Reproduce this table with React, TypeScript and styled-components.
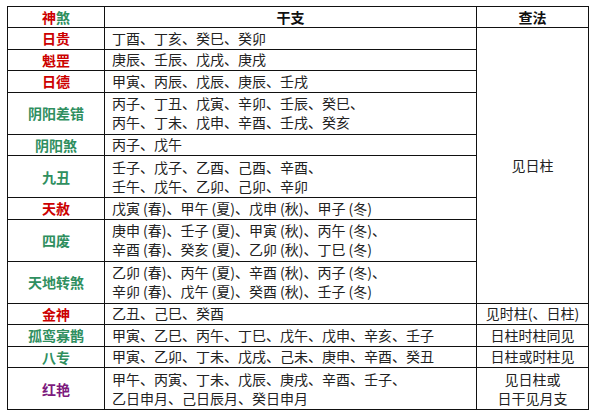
import React from 'react';
import styled, { createGlobalStyle } from 'styled-components';

type Tone = 'red' | 'green' | 'purple';

type Row = {
  name: string;
  tone: Tone;
  lines: string[];
  method?: string[];
};

const toneColor: Record<Tone, string> = {
  red: '#cc0000',
  green: '#2f8f5f',
  purple: '#7d1a7d',
};

const rows: Row[] = [
  { name: '日贵', tone: 'red', lines: ['丁酉、丁亥、癸巳、癸卯'] },
  { name: '魁罡', tone: 'red', lines: ['庚辰、壬辰、戊戌、庚戌'] },
  { name: '日德', tone: 'red', lines: ['甲寅、丙辰、戊辰、庚辰、壬戌'] },
  {
    name: '阴阳差错',
    tone: 'green',
    lines: ['丙子、丁丑、戊寅、辛卯、壬辰、癸巳、', '丙午、丁未、戊申、辛酉、壬戌、癸亥'],
  },
  { name: '阴阳煞', tone: 'green', lines: ['丙子、戊午'] },
  {
    name: '九丑',
    tone: 'green',
    lines: ['壬子、戊子、乙酉、己酉、辛酉、', '壬午、戊午、乙卯、己卯、辛卯'],
  },
  { name: '天赦', tone: 'red', lines: ['戊寅(春)、甲午(夏)、戊申(秋)、甲子(冬)'] },
  {
    name: '四废',
    tone: 'green',
    lines: ['庚申(春)、壬子(夏)、甲寅(秋)、丙午(冬)、', '辛酉(春)、癸亥(夏)、乙卯(秋)、丁巳(冬)'],
  },
  {
    name: '天地转煞',
    tone: 'green',
    lines: ['乙卯(春)、丙午(夏)、辛酉(秋)、丙子(冬)、', '辛卯(春)、戊午(夏)、癸酉(秋)、壬子(冬)'],
  },
  { name: '金神', tone: 'red', lines: ['乙丑、己巳、癸酉'], method: ['见时柱(、日柱)'] },
  {
    name: '孤鸾寡鹊',
    tone: 'green',
    lines: ['甲寅、乙巳、丙午、丁巳、戊午、戊申、辛亥、壬子'],
    method: ['日柱时柱同见'],
  },
  {
    name: '八专',
    tone: 'green',
    lines: ['甲寅、乙卯、丁未、戊戌、己未、庚申、辛酉、癸丑'],
    method: ['日柱或时柱见'],
  },
  {
    name: '红艳',
    tone: 'purple',
    lines: ['甲午、丙寅、丁未、戊辰、庚戌、辛酉、壬子、', '乙日申月、己日辰月、癸日申月'],
    method: ['见日柱或', '日干见月支'],
  },
];

// the month in brackets is set a little apart, like the half-width brackets of the source
function withSeasons(line: string) {
  return line.split(/(\([^)]*\))/).map((part, i) =>
    part.startsWith('(') ? <Season key={i}>{part}</Season> : part
  );
}

export default function App() {
  const sharedSpan = rows.filter((r) => !r.method).length;

  return (
    <>
      <GlobalStyle />
      <Page>
        <Table>
          <colgroup>
            <col style={{ width: 97 }} />
            <col style={{ width: 372 }} />
            <col style={{ width: 112 }} />
          </colgroup>
          <thead>
            <HeadRow>
              <HeadCell>
                <Name $tone="red">神</Name>
                <Name $tone="green">煞</Name>
              </HeadCell>
              <HeadCell>干支</HeadCell>
              <HeadCell>查法</HeadCell>
            </HeadRow>
          </thead>
          <tbody>
            {rows.map((row, i) => (
              <BodyRow key={row.name} $double={row.lines.length > 1}>
                <NameCell>
                  <Name $tone={row.tone}>{row.name}</Name>
                </NameCell>
                <BranchCell>
                  {row.lines.map((line, j) => (
                    <Line key={j}>{withSeasons(line)}</Line>
                  ))}
                </BranchCell>
                {row.method ? (
                  <MethodCell>
                    {row.method.map((m, j) => (
                      <Line key={j}>{m}</Line>
                    ))}
                  </MethodCell>
                ) : (
                  i === 0 && (
                    <MethodCell rowSpan={sharedSpan}>
                      <Line>见日柱</Line>
                    </MethodCell>
                  )
                )}
              </BodyRow>
            ))}
          </tbody>
        </Table>
      </Page>
    </>
  );
}

const GlobalStyle = createGlobalStyle`
  body {
    margin: 0;
    background: #fff;
    font-family: "Noto Sans CJK SC", "Noto Sans", sans-serif;
    color: #111;
  }
`;

const Page = styled.div`
  padding: 6px 0 0 7px;
`;

const Table = styled.table`
  width: 581px;
  border-collapse: collapse;
  table-layout: fixed;
  font-size: 14px;
  line-height: 20px;

  td,
  th {
    border: 1px solid #111;
    padding: 0;
    vertical-align: middle;
  }
`;

const HeadRow = styled.tr`
  height: 21px;
`;

const BodyRow = styled.tr<{ $double: boolean }>`
  height: ${(p) => (p.$double ? '42px' : '21.5px')};
`;

const HeadCell = styled.th`
  font-weight: 700;
  text-align: center;
  color: #111;
`;

const NameCell = styled.td`
  text-align: center;
`;

const Name = styled.span<{ $tone: Tone }>`
  font-weight: 700;
  color: ${(p) => toneColor[p.$tone]};
`;

const BranchCell = styled.td`
  && {
    padding-left: 7px;
  }
  white-space: nowrap;
  color: #222;
`;

const MethodCell = styled.td`
  text-align: center;
  color: #222;
`;

const Line = styled.div`
  line-height: 19px;
`;

const Season = styled.span`
  padding-left: 3px;
`;
